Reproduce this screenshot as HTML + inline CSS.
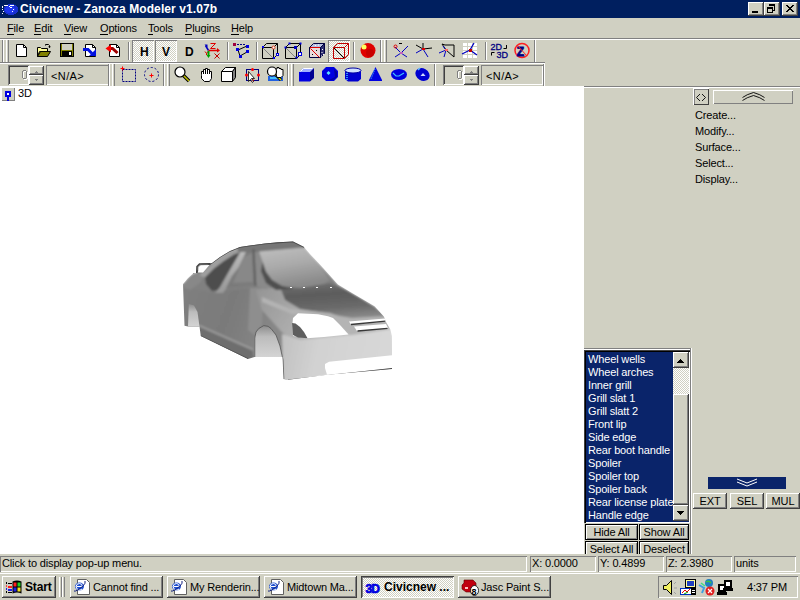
<!DOCTYPE html>
<html><head><meta charset="utf-8">
<style>
*{margin:0;padding:0;box-sizing:border-box}
html,body{width:800px;height:600px;overflow:hidden;background:#d0d0c2}
body{position:relative;font-family:"Liberation Sans",sans-serif;font-size:11px;color:#000}
.a{position:absolute}
.t{position:absolute;white-space:pre;line-height:1;letter-spacing:-0.15px}
.chk{box-shadow:inset 1px 1px #808080,inset -1px -1px #fff;background-color:#fff;
background-image:linear-gradient(45deg,#d0d0c2 25%,transparent 25%,transparent 75%,#d0d0c2 75%),linear-gradient(45deg,#d0d0c2 25%,transparent 25%,transparent 75%,#d0d0c2 75%);
background-size:2px 2px;background-position:0 0,1px 1px}
svg{position:absolute;overflow:visible}
u{text-decoration:none;border-bottom:1px solid #000;padding-bottom:0}
</style></head><body>
<div class="a" style="left:0px;top:0px;width:800px;height:18px;background:#001f5f;"></div>
<div class="t" style="left:20px;top:3px;font-size:12px;font-weight:bold;color:#fff;letter-spacing:0.1px">Civicnew - Zanoza Modeler v1.07b</div>
<svg style="left:0px;top:0px;" width="20" height="18" viewBox="0 0 20 18" shape-rendering="crispEdges"><ellipse cx="11" cy="9.5" rx="7.5" ry="5.5" fill="#1830d0"/><ellipse cx="10" cy="9.5" rx="5" ry="4" fill="#2038f0"/><path d="M3.5 5.5h4M2.5 6v2M2.5 9v1M3.5 11v1M2.5 13v1M10 5.5h4M9.5 6v1M10 7.5h2M13.5 9v1M13 11h-1" stroke="#fff" stroke-width="1" fill="none"/></svg>
<div class="a" style="left:748px;top:2px;width:16px;height:14px;background:#d0d0c2;box-shadow:inset -1px -1px #404040,inset 1px 1px #fff,inset -2px -2px #808080"></div>
<div class="a" style="left:764px;top:2px;width:16px;height:14px;background:#d0d0c2;box-shadow:inset -1px -1px #404040,inset 1px 1px #fff,inset -2px -2px #808080"></div>
<div class="a" style="left:782px;top:2px;width:16px;height:14px;background:#d0d0c2;box-shadow:inset -1px -1px #404040,inset 1px 1px #fff,inset -2px -2px #808080"></div>
<svg style="left:748px;top:2px;" width="16" height="14" viewBox="0 0 16 14" shape-rendering="crispEdges"><rect x="4" y="9" width="6" height="2" fill="#000"/></svg>
<svg style="left:764px;top:2px;" width="16" height="14" viewBox="0 0 16 14" shape-rendering="crispEdges"><rect x="5" y="2" width="6" height="2" fill="#000"/><path d="M10.5 4v4.5h-1.5" stroke="#000" fill="none"/><rect x="3.5" y="5.5" width="5" height="5" stroke="#000" fill="none"/><rect x="3" y="5" width="6" height="2" fill="#000"/></svg>
<svg style="left:782px;top:2px;" width="16" height="14" viewBox="0 0 16 14" shape-rendering="crispEdges"><path d="M4 3l7 7M5 3l7 7M11 3l-7 7M12 3l-7 7" stroke="#000" stroke-width="1" shape-rendering="auto"/></svg>
<div class="t" style="left:7px;top:23px;"><u>F</u>ile</div>
<div class="t" style="left:34px;top:23px;"><u>E</u>dit</div>
<div class="t" style="left:64px;top:23px;"><u>V</u>iew</div>
<div class="t" style="left:100px;top:23px;"><u>O</u>ptions</div>
<div class="t" style="left:148px;top:23px;"><u>T</u>ools</div>
<div class="t" style="left:185px;top:23px;"><u>P</u>lugins</div>
<div class="t" style="left:231px;top:23px;"><u>H</u>elp</div>
<div class="a" style="left:0px;top:38px;width:800px;height:1px;background:#808080;"></div>
<div class="a" style="left:0px;top:39px;width:800px;height:1px;background:#fff;"></div>
<div class="a" style="left:2px;top:40px;width:1px;height:22px;background:#808080;"></div>
<div class="a" style="left:3px;top:40px;width:1px;height:22px;background:#fff;"></div>
<div class="a" style="left:6px;top:40px;width:1px;height:22px;background:#fff;"></div>
<div class="a" style="left:8px;top:40px;width:1px;height:22px;background:#808080;"></div>
<div class="a" style="left:380px;top:40px;width:1px;height:22px;background:#808080;"></div>
<div class="a" style="left:381px;top:40px;width:1px;height:22px;background:#fff;"></div>
<div class="a" style="left:384px;top:40px;width:1px;height:22px;background:#fff;"></div>
<div class="a" style="left:386px;top:40px;width:1px;height:22px;background:#808080;"></div>
<div class="a" style="left:534px;top:40px;width:1px;height:22px;background:#808080;"></div>
<div class="a" style="left:535px;top:40px;width:1px;height:22px;background:#fff;"></div>
<div class="a" style="left:128px;top:42px;width:1px;height:18px;background:#808080;"></div>
<div class="a" style="left:129px;top:42px;width:1px;height:18px;background:#fff;"></div>
<div class="a" style="left:227px;top:42px;width:1px;height:18px;background:#808080;"></div>
<div class="a" style="left:228px;top:42px;width:1px;height:18px;background:#fff;"></div>
<div class="a" style="left:256px;top:42px;width:1px;height:18px;background:#808080;"></div>
<div class="a" style="left:257px;top:42px;width:1px;height:18px;background:#fff;"></div>
<div class="a" style="left:353px;top:42px;width:1px;height:18px;background:#808080;"></div>
<div class="a" style="left:354px;top:42px;width:1px;height:18px;background:#fff;"></div>
<div class="a" style="left:485px;top:42px;width:1px;height:18px;background:#808080;"></div>
<div class="a" style="left:486px;top:42px;width:1px;height:18px;background:#fff;"></div>
<div class="a chk" style="left:132px;top:40px;width:22px;height:22px"></div>
<div class="a chk" style="left:155px;top:40px;width:22px;height:22px"></div>
<div class="a chk" style="left:328px;top:40px;width:22px;height:22px"></div>
<div class="a" style="left:0px;top:62px;width:545px;height:1px;background:#808080;"></div>
<div class="a" style="left:0px;top:63px;width:545px;height:1px;background:#fff;"></div>
<div class="a" style="left:8px;top:65px;width:21px;height:20px;background:#d0d0c2;box-shadow:inset 1px 1px #808080,inset -1px -1px #fff"></div>
<div class="a" style="left:9px;top:66px;width:19px;height:18px;box-shadow:inset 1px 1px #404040"></div>
<svg style="left:8px;top:65px;" width="20" height="19" viewBox="0 0 20 19" shape-rendering="crispEdges"><rect x="15.5" y="6.5" width="4" height="8" rx="2" fill="none" stroke="#fff"/><rect x="14.5" y="5.5" width="4" height="8" rx="2" fill="none" stroke="#808080"/></svg>
<div class="a" style="left:29px;top:66px;width:15px;height:9px;background:#d0d0c2;box-shadow:inset -1px -1px #404040,inset 1px 1px #fff,inset -2px -2px #808080"></div>
<div class="a" style="left:29px;top:75px;width:15px;height:10px;background:#d0d0c2;box-shadow:inset -1px -1px #404040,inset 1px 1px #fff,inset -2px -2px #808080"></div>
<svg style="left:29px;top:66px;" width="15" height="19" viewBox="0 0 15 19" shape-rendering="crispEdges"><path d="M6 6h3M7 5h1" stroke="#808080"/><path d="M6 13h3M7 14h1" stroke="#808080"/></svg>
<div class="a" style="left:46px;top:65px;width:63px;height:20px;background:#d0d0c2;box-shadow:inset 1px 1px #808080,inset -1px -1px #fff"></div>
<div class="t" style="left:51px;top:71px;letter-spacing:0.4px">&lt;N/A&gt;</div>
<div class="a" style="left:108px;top:64px;width:1px;height:22px;background:#808080;"></div>
<div class="a" style="left:109px;top:64px;width:1px;height:22px;background:#fff;"></div>
<div class="a" style="left:112px;top:64px;width:1px;height:22px;background:#fff;"></div>
<div class="a" style="left:114px;top:64px;width:1px;height:22px;background:#808080;"></div>
<div class="a" style="left:163px;top:64px;width:1px;height:22px;background:#808080;"></div>
<div class="a" style="left:164px;top:64px;width:1px;height:22px;background:#fff;"></div>
<div class="a" style="left:167px;top:64px;width:1px;height:22px;background:#fff;"></div>
<div class="a" style="left:169px;top:64px;width:1px;height:22px;background:#808080;"></div>
<div class="a" style="left:287px;top:64px;width:1px;height:22px;background:#808080;"></div>
<div class="a" style="left:288px;top:64px;width:1px;height:22px;background:#fff;"></div>
<div class="a" style="left:291px;top:64px;width:1px;height:22px;background:#fff;"></div>
<div class="a" style="left:293px;top:64px;width:1px;height:22px;background:#808080;"></div>
<div class="a" style="left:434px;top:64px;width:1px;height:22px;background:#808080;"></div>
<div class="a" style="left:435px;top:64px;width:1px;height:22px;background:#fff;"></div>
<div class="a" style="left:443px;top:65px;width:21px;height:20px;background:#d0d0c2;box-shadow:inset 1px 1px #808080,inset -1px -1px #fff"></div>
<div class="a" style="left:444px;top:66px;width:19px;height:18px;box-shadow:inset 1px 1px #404040"></div>
<svg style="left:443px;top:65px;" width="20" height="19" viewBox="0 0 20 19" shape-rendering="crispEdges"><rect x="15.5" y="6.5" width="4" height="8" rx="2" fill="none" stroke="#fff"/><rect x="14.5" y="5.5" width="4" height="8" rx="2" fill="none" stroke="#808080"/></svg>
<div class="a" style="left:464px;top:66px;width:15px;height:9px;background:#d0d0c2;box-shadow:inset -1px -1px #404040,inset 1px 1px #fff,inset -2px -2px #808080"></div>
<div class="a" style="left:464px;top:75px;width:15px;height:10px;background:#d0d0c2;box-shadow:inset -1px -1px #404040,inset 1px 1px #fff,inset -2px -2px #808080"></div>
<svg style="left:464px;top:66px;" width="15" height="19" viewBox="0 0 15 19" shape-rendering="crispEdges"><path d="M6 6h3M7 5h1" stroke="#808080"/><path d="M6 13h3M7 14h1" stroke="#808080"/></svg>
<div class="a" style="left:481px;top:65px;width:62px;height:20px;background:#d0d0c2;box-shadow:inset 1px 1px #808080,inset -1px -1px #fff"></div>
<div class="t" style="left:486px;top:71px;letter-spacing:0.4px">&lt;N/A&gt;</div>
<div class="a" style="left:543px;top:64px;width:1px;height:22px;background:#808080;"></div>
<div class="a" style="left:544px;top:64px;width:1px;height:22px;background:#fff;"></div>
<div class="a" style="left:0px;top:86px;width:584px;height:468px;background:#fff;"></div>
<div class="a" style="left:2px;top:88px;width:13px;height:13px;background:#d0d0c2;box-shadow:inset -1px -1px #808080"></div>
<svg style="left:2px;top:88px;" width="13" height="13" viewBox="0 0 13 13" shape-rendering="crispEdges"><rect x="4" y="4" width="4" height="4" stroke="#0000e0" stroke-width="1.4" fill="#fff"/><path d="M6 8v5" stroke="#0000e0" stroke-width="1.4"/></svg>
<div class="t" style="left:18px;top:88px;font-size:11px">3D</div>
<svg style="left:0;top:0" width="584" height="554" viewBox="0 0 584 554"><defs><clipPath id="cs"><path d="M183,284 L188,278 L193,273.5 L196,273 L197,267 L199,264.5 L202,263.5 L210,263.5 L212,263 L220,257 L230,251 L240,247 L250,245.5 L265,243.5 L278,242.2 L293,241.5 L296,243 L304,247 L310,254 L320,264.5 L338,284.5 L353,293.5 L374.7,306.3 L384,316.7 L386,322 L390.3,329.3 L392,336 L392,369 L327,374.8 L286,380 L283.5,379 L282.5,357 L254.5,357 L248,359 L200.75,336 L199.5,326.5 L188,326.5 L184.5,325.8 Z"/></clipPath><filter id="bl" x="-5%" y="-5%" width="110%" height="110%"><feGaussianBlur stdDeviation="0.95"/></filter><linearGradient id="gWind" x1="0" y1="0" x2="0.3" y2="1"><stop offset="0" stop-color="#c0c0c0"/><stop offset="0.5" stop-color="#aaaaaa"/><stop offset="1" stop-color="#8a8a8a"/></linearGradient><linearGradient id="gHood" x1="0" y1="0" x2="0.2" y2="1"><stop offset="0" stop-color="#747474"/><stop offset="0.35" stop-color="#5c5c5c"/><stop offset="0.7" stop-color="#6a6a6a"/><stop offset="1" stop-color="#8c8c8c"/></linearGradient><linearGradient id="gSide" x1="0" y1="0" x2="1" y2="0.3"><stop offset="0" stop-color="#808080"/><stop offset="0.5" stop-color="#7a7a7a"/><stop offset="1" stop-color="#8a8a8a"/></linearGradient><linearGradient id="gFront" x1="0" y1="0" x2="1" y2="0.1"><stop offset="0" stop-color="#c0c0c0"/><stop offset="0.35" stop-color="#d2d2d2"/><stop offset="1" stop-color="#d8d8d8"/></linearGradient><linearGradient id="gFender" x1="0" y1="0" x2="1" y2="0.4"><stop offset="0" stop-color="#949494"/><stop offset="0.5" stop-color="#aaaaaa"/><stop offset="1" stop-color="#c0c0c0"/></linearGradient><linearGradient id="gArch" x1="0" y1="0" x2="0" y2="1"><stop offset="0" stop-color="#8c8c8c"/><stop offset="0.35" stop-color="#bcbcbc"/><stop offset="1" stop-color="#d4d4d4"/></linearGradient><linearGradient id="gCp" x1="0" y1="0" x2="0" y2="1"><stop offset="0" stop-color="#bcbcbc"/><stop offset="1" stop-color="#989898"/></linearGradient></defs><g clip-path="url(#cs)"><g filter="url(#bl)"><path d="M183,284 L188,278 L193,273.5 L196,273 L197,267 L199,264.5 L202,263.5 L210,263.5 L212,263 L220,257 L230,251 L240,247 L250,245.5 L265,243.5 L278,242.2 L293,241.5 L296,243 L304,247 L310,254 L320,264.5 L338,284.5 L353,293.5 L374.7,306.3 L384,316.7 L386,322 L390.3,329.3 L392,336 L392,369 L327,374.8 L286,380 L283.5,379 L282.5,357 L254.5,357 L248,359 L200.75,336 L199.5,326.5 L188,326.5 L184.5,325.8 Z" fill="#808080"/><path d="M178,285 L208,292 L256,288 L290,300 L284,330 L283,382 L250,362 L178,330 Z" fill="url(#gSide)"/><path d="M250,288 L264,288 L262,325 L254,335 L248,330 Z" fill="#8e8e8e"/><path d="M180,286 L196,273 L204,276 L200,283 L190,290 Z" fill="#888888"/><path d="M199,275 L212,264 L222,257 L232,251 L241,247.5 L245,250 L234,254.5 L224,261 L214,268.5 L205,277.5 Z" fill="#a0a0a0"/><path d="M205,277.5 L214,268.5 L224,261 L234,254.5 L240,252.5 L236,262 L228,275 L220,290 L212,291 L206,284 Z" fill="#4e4e4e"/><path d="M240,252.5 L247,250 L239,267 L230,283 L223,293 L215,293 L220,287 L228,273 Z" fill="url(#gCp)"/><path d="M247,250 L254,249 L256,285 L226,288 L232,276 L239,267 Z" fill="#7a7a7a"/><path d="M244,257 L252,253 L253,282 L233,283 Z" fill="#888888"/><path d="M253,249 L259,251 L265,271 L273,281 L270,290 L256,286 Z" fill="#8a8a8a"/><path d="M236,238 L300,236 L306,247 L302,248.5 L259,252 L238,252 Z" fill="#767676"/><path d="M259,251.5 L304,247.5 L310,254 L320,265 L330,280 L320,286 L300,288 L290,288 L282,286 L272,280 L266,272 L263,263 Z" fill="url(#gWind)"/><path d="M280,286 L300,288 L330,283 L345,290 L360,298 L376,308 L390,318 L352,322 L330,314 L300,309 L285,300 Z" fill="url(#gHood)"/><path d="M198,326 L252,350 L254,358 L248,360 L198,337 Z" fill="#6e6e6e"/><path d="M199,325.5 L253,349.5" stroke="#a0a0a0" stroke-width="1.4"/><path d="M256,290 L280,287 L285,300 L300,309 L330,314 L352,322 L356,330 L352,336 L310,340 L292,342 L280,330 L262,310 Z" fill="url(#gFender)"/><path d="M262,297 L290,309 L330,313 L350,320 L346,323 L328,317 L292,314 L262,302 Z" fill="#b4b4b4"/><path d="M328,314 L352,318 L388,316 L392,334 L352,337 L342,328 Z" fill="#b4b4b4"/><path d="M282,334 L300,340 L352,335 L392,329 L396,372 L327,376 L283,384 Z" fill="url(#gFront)"/><path d="M253.5,249 L255.5,286" stroke="#555" stroke-width="1.6"/><path d="M262.5,262 L266,272 L272,280 L282,286 L294,289 L276,290 L266,283 L261,271 Z" fill="#505050"/></g><path d="M193,273.5 L212,263 L220,257 L230,251 L240,247 L250,245.5 L265,243.5 L293,241.5 L304,247" stroke="#4a4a4a" stroke-width="1.4" fill="none"/><path d="M254.5,357 L254.5,338 L256,332 L258.75,328.5 L263.75,325.6 L268,326.3 L271,328.5 L276,335 L280,346 L282,355 L282.5,357 Z" fill="url(#gArch)"/><path d="M254.8,357 L254.8,338 L256,332 L258.75,328.5 L263.75,325.6 L268,326.3 L271,328.5 L276,335 L280,346 L283,360 L283.8,379" stroke="#505050" stroke-width="1" fill="none" opacity="0.75"/><path d="M188.8,304 L194,305.5 L197.5,312 L199.5,326.5 L188,326.5 Z" fill="url(#gArch)"/><path d="M293,318 L298,313.3 L318,314.3 L328,316.3 L333,318 L340,325 L348.5,334.5 L324,337 L307,338.3 L293,336 L292.5,323 Z" fill="#fff"/><path d="M292,323 L295.5,323.5 L300,327 L304,332 L307.5,338.3 L298,337.5 L293,335 Z" fill="#5e5e5e"/><path d="M349,321.5 L385,318.5 L386.5,321.5 L351,324.5 Z" fill="#fff"/><path d="M354,326.5 L386,324 L388,328 L357,331 Z" fill="#fff"/><path d="M351,324.5 L385.4,321.2" stroke="#383838" stroke-width="1.3"/><path d="M357.5,331 L387.5,328.3" stroke="#383838" stroke-width="1.3"/><path d="M329,361.8 L392,355.3 L392,368.3 L327,374.8 L325,368 L325,364 Z" fill="#fff"/><path d="M288,380.2 L392,368.8" stroke="#404040" stroke-width="1.5"/><path d="M200.75,336 L248,358.75" stroke="#505050" stroke-width="1.2"/><rect x="290" y="287" width="2" height="1" fill="#fff"/><rect x="303" y="287" width="2" height="1" fill="#fff"/><rect x="316" y="287" width="2" height="1" fill="#fff"/><rect x="330" y="287" width="2" height="1" fill="#fff"/></g><path d="M198,272.5 L198.5,267 L200.8,265.2 L209.5,265 L203,272.5 Z" fill="#fff"/><path d="M196.8,273 L197,266.5 L199.5,264 L210.5,263.8" stroke="#404040" stroke-width="1.5" fill="none"/></svg>
<div class="a" style="left:584px;top:86px;width:216px;height:1px;background:#808080;"></div>
<div class="a" style="left:584px;top:87px;width:216px;height:1px;background:#fff;"></div>
<div class="a" style="left:693px;top:88px;width:16px;height:17px;background:#d0d0c2;box-shadow:inset 1px 1px #fff,inset -1px -1px #404040,inset 2px 2px #808080"></div>
<svg style="left:693px;top:88px;" width="16" height="17" viewBox="0 0 16 17" shape-rendering="crispEdges"><path d="M7 6l-3.5 3.5l3.5 3.5M9 6l3.5 3.5l-3.5 3.5" stroke="#000" fill="none" stroke-width="0.9" shape-rendering="auto"/></svg>
<div class="a" style="left:713px;top:90px;width:80px;height:14px;background:#d0d0c2;box-shadow:inset 1px 1px #fff,inset -1px -1px #808080"></div>
<svg style="left:713px;top:90px;" width="80" height="14" viewBox="0 0 80 14" shape-rendering="crispEdges"><path d="M29.5 7.5q4-3 11-5q7 2 11 5M29.5 10.5q4-3 11-5q7 2 11 5" stroke="#000" fill="none" stroke-width="0.9" shape-rendering="auto"/></svg>
<div class="t" style="left:695px;top:110px;">Create...</div>
<div class="t" style="left:695px;top:126px;">Modify...</div>
<div class="t" style="left:695px;top:142px;">Surface...</div>
<div class="t" style="left:695px;top:158px;">Select...</div>
<div class="t" style="left:695px;top:174px;">Display...</div>
<div class="a" style="left:584px;top:348px;width:108px;height:1px;background:#808080;"></div>
<div class="a" style="left:584px;top:349px;width:108px;height:1px;background:#fff;"></div>
<div class="a" style="left:690px;top:348px;width:1px;height:206px;background:#808080;"></div>
<div class="a" style="left:691px;top:348px;width:1px;height:206px;background:#fff;"></div>
<div class="a" style="left:584px;top:350px;width:106px;height:173px;background:#0a246a;box-shadow:inset 1px 1px #404040,inset 2px 2px #000,inset -1px -1px #fff"></div>
<div class="t" style="left:588px;top:354px;color:#fff">Wheel wells</div>
<div class="t" style="left:588px;top:367px;color:#fff">Wheel arches</div>
<div class="t" style="left:588px;top:380px;color:#fff">Inner grill</div>
<div class="t" style="left:588px;top:393px;color:#fff">Grill slat 1</div>
<div class="t" style="left:588px;top:406px;color:#fff">Grill slatt 2</div>
<div class="t" style="left:588px;top:419px;color:#fff">Front lip</div>
<div class="t" style="left:588px;top:432px;color:#fff">Side edge</div>
<div class="t" style="left:588px;top:445px;color:#fff">Rear boot handle</div>
<div class="t" style="left:588px;top:458px;color:#fff">Spoiler</div>
<div class="t" style="left:588px;top:471px;color:#fff">Spoiler top</div>
<div class="t" style="left:588px;top:484px;color:#fff">Spoiler back</div>
<div class="t" style="left:588px;top:497px;color:#fff">Rear license plate</div>
<div class="t" style="left:588px;top:510px;color:#fff">Handle edge</div>
<div class="a chk" style="left:673px;top:352px;width:16px;height:168px;box-shadow:none"></div>
<div class="a" style="left:673px;top:352px;width:16px;height:16px;background:#d0d0c2;box-shadow:inset -1px -1px #404040,inset 1px 1px #fff,inset -2px -2px #808080"></div>
<svg style="left:673px;top:352px;" width="16" height="16" viewBox="0 0 16 16" shape-rendering="crispEdges"><path d="M4 10h7M5 9h5M6 8h3M7 7h1" stroke="#000"/></svg>
<div class="a" style="left:673px;top:394px;width:16px;height:111px;background:#d0d0c2;box-shadow:inset -1px -1px #404040,inset 1px 1px #fff,inset -2px -2px #808080"></div>
<div class="a" style="left:673px;top:505px;width:16px;height:16px;background:#d0d0c2;box-shadow:inset -1px -1px #404040,inset 1px 1px #fff,inset -2px -2px #808080"></div>
<svg style="left:673px;top:505px;" width="16" height="16" viewBox="0 0 16 16" shape-rendering="crispEdges"><path d="M4 6h7M5 7h5M6 8h3M7 9h1" stroke="#000"/></svg>
<div class="a" style="left:585px;top:524px;width:53px;height:16px;background:#d0d0c2;border:1px solid #000;box-shadow:inset 1px 1px #fff,inset -1px -1px #808080"></div>
<div class="t" style="left:585px;top:527px;width:53px;text-align:center">Hide All</div>
<div class="a" style="left:639px;top:524px;width:50px;height:16px;background:#d0d0c2;border:1px solid #000;box-shadow:inset 1px 1px #fff,inset -1px -1px #808080"></div>
<div class="t" style="left:639px;top:527px;width:50px;text-align:center">Show All</div>
<div class="a" style="left:585px;top:541px;width:53px;height:16px;background:#d0d0c2;border:1px solid #000;box-shadow:inset 1px 1px #fff,inset -1px -1px #808080"></div>
<div class="t" style="left:585px;top:544px;width:53px;text-align:center">Select All</div>
<div class="a" style="left:639px;top:541px;width:50px;height:16px;background:#d0d0c2;border:1px solid #000;box-shadow:inset 1px 1px #fff,inset -1px -1px #808080"></div>
<div class="t" style="left:639px;top:544px;width:50px;text-align:center">Deselect</div>
<div class="a" style="left:708px;top:477px;width:78px;height:12px;background:#0a246a;"></div>
<svg style="left:708px;top:477px;" width="78" height="12" viewBox="0 0 78 12" shape-rendering="crispEdges"><path d="M29 2l10 4l10-4M29 5l10 4l10-4" stroke="#fff" fill="none" shape-rendering="auto"/></svg>
<div class="a" style="left:693px;top:493px;width:34px;height:16px;background:#d0d0c2;box-shadow:inset -1px -1px #404040,inset 1px 1px #fff,inset -2px -2px #808080"></div>
<div class="t" style="left:693px;top:496px;width:34px;text-align:center">EXT</div>
<div class="a" style="left:730px;top:493px;width:34px;height:16px;background:#d0d0c2;box-shadow:inset -1px -1px #404040,inset 1px 1px #fff,inset -2px -2px #808080"></div>
<div class="t" style="left:730px;top:496px;width:34px;text-align:center">SEL</div>
<div class="a" style="left:766px;top:493px;width:34px;height:16px;background:#d0d0c2;box-shadow:inset -1px -1px #404040,inset 1px 1px #fff,inset -2px -2px #808080"></div>
<div class="t" style="left:766px;top:496px;width:34px;text-align:center">MUL</div>
<div class="a" style="left:0px;top:554px;width:800px;height:18px;background:#d0d0c2;"></div>
<div class="a" style="left:0px;top:556px;width:527px;height:16px;background:#d0d0c2;box-shadow:inset 1px 1px #808080,inset -1px -1px #fff"></div>
<div class="t" style="left:2px;top:558px;">Click to display pop-up menu.</div>
<div class="a" style="left:530px;top:556px;width:66px;height:16px;background:#d0d0c2;box-shadow:inset 1px 1px #808080,inset -1px -1px #fff"></div>
<div class="t" style="left:532px;top:558px;">X: 0.0000</div>
<div class="a" style="left:598px;top:556px;width:66px;height:16px;background:#d0d0c2;box-shadow:inset 1px 1px #808080,inset -1px -1px #fff"></div>
<div class="t" style="left:600px;top:558px;">Y: 0.4899</div>
<div class="a" style="left:666px;top:556px;width:66px;height:16px;background:#d0d0c2;box-shadow:inset 1px 1px #808080,inset -1px -1px #fff"></div>
<div class="t" style="left:668px;top:558px;">Z: 2.3980</div>
<div class="a" style="left:734px;top:556px;width:62px;height:16px;background:#d0d0c2;box-shadow:inset 1px 1px #808080,inset -1px -1px #fff"></div>
<div class="t" style="left:736px;top:558px;">units</div>
<div class="a" style="left:0px;top:572px;width:800px;height:28px;background:#d0d0c2;"></div>
<div class="a" style="left:0px;top:572px;width:800px;height:1px;background:#d0d0c2;"></div>
<div class="a" style="left:0px;top:573px;width:800px;height:1px;background:#fff;"></div>
<div class="a" style="left:2px;top:576px;width:54px;height:22px;background:#d0d0c2;box-shadow:inset -1px -1px #404040,inset 1px 1px #fff,inset -2px -2px #808080"></div>
<div class="t" style="left:25px;top:581px;font-weight:bold;font-size:12px">Start</div>
<div class="a" style="left:59px;top:577px;width:1px;height:20px;background:#fff;"></div>
<div class="a" style="left:61px;top:577px;width:1px;height:20px;background:#808080;"></div>
<div class="a" style="left:62px;top:577px;width:1px;height:20px;background:#fff;"></div>
<div class="a" style="left:64px;top:577px;width:1px;height:20px;background:#808080;"></div>
<div class="a" style="left:70px;top:576px;width:93px;height:22px;background:#d0d0c2;box-shadow:inset -1px -1px #404040,inset 1px 1px #fff,inset -2px -2px #808080"></div>
<div class="t" style="left:93px;top:582px;">Cannot find ...</div>
<div class="a" style="left:167px;top:576px;width:93px;height:22px;background:#d0d0c2;box-shadow:inset -1px -1px #404040,inset 1px 1px #fff,inset -2px -2px #808080"></div>
<div class="t" style="left:190px;top:582px;">My Renderin...</div>
<div class="a" style="left:264px;top:576px;width:93px;height:22px;background:#d0d0c2;box-shadow:inset -1px -1px #404040,inset 1px 1px #fff,inset -2px -2px #808080"></div>
<div class="t" style="left:287px;top:582px;">Midtown Ma...</div>
<div class="a chk" style="left:361px;top:576px;width:93px;height:22px;box-shadow:inset 1px 1px #404040,inset -1px -1px #fff,inset 2px 2px #808080"></div>
<div class="t" style="left:384px;top:581px;font-weight:bold;font-size:12px;letter-spacing:0">Civicnew ...</div>
<div class="a" style="left:458px;top:576px;width:93px;height:22px;background:#d0d0c2;box-shadow:inset -1px -1px #404040,inset 1px 1px #fff,inset -2px -2px #808080"></div>
<div class="t" style="left:481px;top:582px;">Jasc Paint S...</div>
<div class="a" style="left:658px;top:576px;width:140px;height:22px;background:#d0d0c2;box-shadow:inset 1px 1px #808080,inset -1px -1px #fff"></div>
<div class="t" style="left:747px;top:582px;">4:37 PM</div>
<svg style="left:0;top:0" width="800" height="100" viewBox="0 0 800 100"><path d="M16.5 44.5h7l3 3v9h-10z" fill="#fff" stroke="#000"/><path d="M23.5 44.5v3h3" fill="none" stroke="#000"/><path d="M37.5 47.5h3l1 1h6v3h-8l-2 5z" fill="#ffff99" stroke="#000"/><path d="M37.5 56.5l3-5h10l-3 5z" fill="#808000" stroke="#000"/><path d="M45.5 45.5v-1h3l1 1v2" fill="none" stroke="#000"/><path d="M48 46.5h3l-1.5 1.5z" fill="#000"/><rect x="60.5" y="43.5" width="13" height="13" fill="#808000" stroke="#000"/><rect x="62" y="44" width="10" height="6" fill="#d0d0c2"/><rect x="62" y="51" width="10" height="5" fill="#000"/><rect x="69" y="52" width="2" height="3" fill="#fff"/><path d="M85.5 44.5h7l3 3v9h-10z" fill="#fff" stroke="#000"/><path d="M92.5 44.5v3h3" fill="none" stroke="#000"/><path d="M83 49.5h5l4 4" fill="none" stroke="#0010e0" stroke-width="3"/><path d="M89 56h7v-7z" fill="#0010e0"/><path d="M109.5 44.5h7l3 3v9h-10z" fill="#fff" stroke="#000"/><path d="M116.5 44.5v3h3" fill="none" stroke="#000"/><path d="M110 48.5h2.5l5 4.5" fill="none" stroke="#a00000" stroke-width="3"/><path d="M105.5 48.5l5.5-4v8z" fill="#ff0000"/><text x="140" y="55.5" font-family="Liberation Sans" font-weight="bold" font-size="12" fill="#000">H</text><text x="162" y="55.5" font-family="Liberation Sans" font-weight="bold" font-size="12" fill="#000">V</text><text x="185" y="55.5" font-family="Liberation Sans" font-weight="bold" font-size="12" fill="#000">D</text><path d="M208.5 50.5l-3-5" stroke="#0000c0" stroke-width="1.5" fill="none"/><path d="M204.5 44.5h3v3z" fill="#0000c0"/><path d="M210.5 43.5h5l-5 5h5" stroke="#e00000" fill="none"/><path d="M208.5 50.5h10" stroke="#e00000" stroke-width="1.5"/><path d="M217 48l3 2.5l-3 2z" fill="#e00000"/><path d="M214.5 53.5l5 5M219.5 53.5l-5 5" stroke="#c00000"/><path d="M205 51.5l1.5 2l1.5-2M206.5 53.5v1.5" stroke="#e00000" fill="none"/><path d="M208.5 51v4" stroke="#00a000" stroke-width="2"/><path d="M206.5 55h4l-2 3z" fill="#00a000"/><rect x="233" y="43" width="3" height="3" fill="#a00040"/><path d="M237 44.5h2M240 44.5h2M243 44.5h2" stroke="#000080"/><path d="M238 50l9-4M238 50l2 6M240 56l7-4" stroke="#000" stroke-width="1" fill="none"/><rect x="246" y="45" width="3" height="3" fill="#0000e0"/><rect x="236" y="48" width="3" height="3" fill="#0000e0"/><rect x="246" y="50" width="3" height="3" fill="#0000e0"/><rect x="239" y="55" width="3" height="3" fill="#0000e0"/><path d="M262.5 47.5h11v11h-11z" fill="none" stroke="#000"/><path d="M262.5 47.5l4-4h11v11l-4 4M273.5 47.5l4-4" fill="none" stroke="#000"/><path d="M263 48l10 10" stroke="#808080"/><circle cx="273.5" cy="47.5" r="1.5" fill="#fff" stroke="#e04020"/><rect x="276.5" y="53.5" width="2" height="2" fill="#fff" stroke="#0000e0"/><rect x="262" y="46" width="2" height="2" fill="#0000e0"/><rect x="273" y="57" width="2" height="2" fill="#0000e0"/><path d="M285.5 47.5h11v11h-11z" fill="none" stroke="#000"/><path d="M285.5 47.5l4-4h11v11l-4 4M296.5 47.5l4-4" fill="none" stroke="#000"/><path d="M286 48l10 10" stroke="#808080"/><rect x="284.5" y="46.5" width="2" height="2" fill="#0000e0"/><rect x="295.5" y="56.5" width="2" height="2" fill="#0000e0"/><rect x="288.5" y="42.5" width="2" height="2" fill="#0000e0"/><rect x="299.5" y="42.5" width="2" height="2" fill="#0000e0"/><rect x="294" y="46" width="3" height="3" fill="#0000c0"/><rect x="298.5" y="52.5" width="3" height="3" fill="#fff" stroke="#0000e0"/><path d="M309.5 47.5h11v10h-11z" fill="#e8dcdc" stroke="#000040"/><path d="M309.5 47.5l4-4h11l-4 4z" fill="#b8c0e0" stroke="#000040"/><path d="M320.5 47.5l4-4v10l-4 4z" fill="#303070" stroke="#000040"/><path d="M310 47.5h10" stroke="#e00000"/><path d="M310.5 48.5l9 9" stroke="#e00000"/><rect x="315" y="45" width="1" height="1" fill="#fff"/><rect x="318" y="44.5" width="1" height="1" fill="#fff"/><rect x="322" y="49" width="1" height="1" fill="#fff"/><rect x="321.5" y="52" width="1" height="1" fill="#fff"/><rect x="323" y="54" width="1" height="1" fill="#fff"/><rect x="321" y="55.5" width="1" height="1" fill="#fff"/><rect x="312" y="54" width="1" height="1" fill="#000"/><rect x="316" y="50" width="1" height="1" fill="#000"/><path d="M333.5 47.5h11v11h-11z" fill="none" stroke="#c00000"/><path d="M333.5 47.5l4-4h11v11l-4 4M344.5 47.5l4-4" fill="none" stroke="#c00000"/><path d="M334 48l10 10" stroke="#000"/><circle cx="368" cy="50.5" r="7.5" fill="#e00000"/><circle cx="364" cy="47" r="2.5" fill="#ffff60"/><circle cx="370" cy="53" r="4" fill="#b00000" opacity="0.5"/><path d="M395 47l6 6l7-7M401 53l-6 4M401 53l6 4" stroke="#0000c0" fill="none"/><circle cx="395.5" cy="46.5" r="1.5" fill="none" stroke="#e00000"/><path d="M399 43.5h3" stroke="#000"/><rect x="400" y="52" width="3" height="2" fill="#c060c0"/><path d="M423 49l-7-4M423 49v-6M423 49l9-1" stroke="#000" fill="none"/><path d="M423 49l-7 4M423 49l5 8" stroke="#0000c0" fill="none"/><rect x="422" y="48" width="3" height="2" fill="#e00000"/><path d="M442 44l3 1h9v12l-8-7M442 44l4 6" stroke="#000" fill="none"/><path d="M446 50l-7 3M446 50l-2 7M446 50l-3-4" stroke="#0000c0" fill="none"/><rect x="445" y="49" width="3" height="2" fill="#ff6060"/><rect x="463" y="43" width="4" height="3" fill="#fff"/><rect x="463" y="47" width="4" height="3" fill="#fff"/><rect x="463" y="51" width="4" height="3" fill="#fff"/><rect x="463" y="55" width="4" height="3" fill="#fff"/><rect x="468" y="43" width="4" height="3" fill="#fff"/><rect x="468" y="47" width="4" height="3" fill="#fff"/><rect x="468" y="51" width="4" height="3" fill="#fff"/><rect x="468" y="55" width="4" height="3" fill="#fff"/><rect x="473" y="43" width="4" height="3" fill="#fff"/><rect x="473" y="47" width="4" height="3" fill="#fff"/><rect x="473" y="51" width="4" height="3" fill="#fff"/><rect x="473" y="55" width="4" height="3" fill="#fff"/><path d="M470 50l4-7M470 50l-8 4M470 50l7 5" stroke="#0000c0" fill="none" stroke-width="1.3"/><rect x="469" y="49" width="3" height="3" fill="#c00000"/><text x="490.5" y="49.5" font-family="Liberation Sans" font-size="9" fill="#000080" stroke="#000080" stroke-width="0.3">2D</text><text x="496.5" y="58" font-family="Liberation Sans" font-size="9" fill="#000080" stroke="#000080" stroke-width="0.3">3D</text><path d="M506.5 45v3.5h-3M491.5 55.5v-3h3" stroke="#000" fill="none"/><circle cx="522" cy="50.5" r="7" fill="none" stroke="#ff2020" stroke-width="1.5"/><text x="516.8" y="56" font-family="Liberation Sans" font-weight="bold" font-size="12" fill="#000080" stroke="#000080" stroke-width="0.8">Z</text><path d="M517 45l10 11" stroke="#ff2020"/><path d="M122.5 69.5h13v12h-13z" fill="none" stroke="#000080" stroke-dasharray="2 1"/><path d="M120.5 68.5h4M122.5 66.5v4" stroke="#ff0000"/><circle cx="151.5" cy="74.5" r="7" fill="none" stroke="#000080" stroke-dasharray="2 2"/><path d="M149.5 75.5h4M151.5 73.5v4" stroke="#ff0000"/><path d="M183 75l6 6" stroke="#000" stroke-width="3.5"/><path d="M183 75l6 6" stroke="#c0c000" stroke-width="1.5"/><circle cx="180" cy="72" r="5" fill="#fff" stroke="#000" stroke-width="1.2"/><path d="M201.5 74.5v-3h2v-2h2v-1h2v1h2v2h2v7l-2 3h-5l-3-3v-3z" fill="#fff" stroke="#000"/><path d="M203.5 70v4M205.5 69v5M207.5 69v5M209.5 70v4" stroke="#000"/><path d="M221.5 71.5h11v10h-11z" fill="#fff" stroke="#000"/><path d="M221.5 71.5l4-4h10l-3 4z" fill="#fff" stroke="#000"/><path d="M232.5 71.5l3-4v10l-3 4z" fill="#808080" stroke="#000"/><rect x="246.5" y="69.5" width="12" height="11" fill="#d0d0c2" stroke="#000080"/><circle cx="252.5" cy="69.5" r="1.5" fill="#ff0000"/><circle cx="246.5" cy="75" r="1.5" fill="#ff0000"/><circle cx="258.5" cy="75" r="1.5" fill="#ff0000"/><circle cx="252.5" cy="80.5" r="1.5" fill="#ff0000"/><path d="M248.5 71.5v10l2-2l2 3l1-1l-2-3h3z" fill="#fff" stroke="#000" stroke-width="0.8"/><rect x="268" y="76" width="15" height="5" fill="#2060e0"/><rect x="270" y="77" width="10" height="2" fill="#40c0ff"/><path d="M275 74l6 6" stroke="#000" stroke-width="3"/><path d="M275 74l6 6" stroke="#e0e000" stroke-width="1.2"/><path d="M275.5 72v-3h1.5v-1.5h2v1h2v1h2v6l-2 2h-4z" fill="#fff" stroke="#000"/><circle cx="272" cy="71.5" r="4.5" fill="#fff" stroke="#000" stroke-width="1.2"/><path d="M299 72h11v9.5h-11z" fill="#0000e0"/><path d="M299 72l4-4h11l-4 4z" fill="#a0b0ff"/><path d="M300.5 71.5l3-3h9" stroke="#fff" fill="none"/><path d="M310 72l4-4v10l-4 3.5z" fill="#000090"/><path d="M326 67h8l4 4v6l-4 4h-8l-4-4v-6z" fill="#0000e0"/><path d="M334 69l3 3v5l-4 3h-4l6-3z" fill="#0000a0"/><path d="M328.5 71l2 2l-2 2l-2-2z" fill="#60e0ff"/><path d="M345 71v8l3 2.5h10l3-2.5v-8z" fill="#0000d0"/><ellipse cx="353" cy="70.5" rx="8" ry="2.5" fill="#d0e0ff" stroke="#0000a0"/><path d="M347 73v7" stroke="#40c0ff" stroke-width="1.5" stroke-dasharray="1 1"/><path d="M375.5 67l6.5 13v1h-13v-1z" fill="#0000e0"/><path d="M375 69l-4 10" stroke="#40c0ff" stroke-width="1" stroke-dasharray="1 1"/><ellipse cx="399" cy="74.5" rx="8" ry="5.5" fill="#0000e0"/><path d="M393 73l3 3h3l5-3" stroke="#40c0ff" fill="none" stroke-width="1.2"/><ellipse cx="422.5" cy="74.5" rx="7.5" ry="6" fill="#0000d0" transform="rotate(30 422.5 74.5)"/><path d="M418 70l2-2" stroke="#60c0ff" stroke-width="1.5"/><path d="M420.5 76l2.5-3l2.5 3z" fill="#d0d8ff"/></svg>
<svg style="left:0;top:0" width="800" height="600" viewBox="0 0 800 600"><path d="M12.5 581.5 q4.5-2 9 0 v12 q-4.5-2 -9 0z" fill="#000"/><rect x="13.5" y="582.5" width="3" height="4" fill="#ff2020"/><rect x="17.5" y="582.5" width="3" height="4" fill="#20d020"/><rect x="13.5" y="587.5" width="3" height="4" fill="#2020e0"/><rect x="17.5" y="587.5" width="3" height="4" fill="#f0e020"/><rect x="6" y="582" width="1" height="2" fill="#000"/><rect x="6" y="585" width="1" height="2" fill="#ff4040"/><rect x="6" y="588" width="1" height="2" fill="#2020e0"/><rect x="6" y="591" width="1" height="2" fill="#000"/><rect x="8" y="583" width="4" height="1" fill="#000"/><rect x="8" y="586" width="4" height="2" fill="#ff2020"/><rect x="8" y="589" width="4" height="2" fill="#2020e0"/><rect x="8" y="592" width="4" height="1" fill="#000"/><path d="M77.5 579.5h9l3 3v12h-12z" fill="#fff" stroke="#606060"/><ellipse cx="79.5" cy="586.5" rx="4.5" ry="4" fill="#2050d0"/><path d="M76.5 586.5h6M82.5 586.5q-0.5-3-3-3q-3 0-3.5 3q0.5 3.5 3.5 3.5q1.5 0 2.5-1" stroke="#fff" fill="none" stroke-width="1"/><path d="M74 591q2 1 9-5q3-3 2-5" stroke="#102080" fill="none" stroke-width="1"/><path d="M174.5 579.5h9l3 3v12h-12z" fill="#fff" stroke="#606060"/><ellipse cx="176.5" cy="586.5" rx="4.5" ry="4" fill="#2050d0"/><path d="M173.5 586.5h6M179.5 586.5q-0.5-3-3-3q-3 0-3.5 3q0.5 3.5 3.5 3.5q1.5 0 2.5-1" stroke="#fff" fill="none" stroke-width="1"/><path d="M171 591q2 1 9-5q3-3 2-5" stroke="#102080" fill="none" stroke-width="1"/><path d="M271.5 579.5h9l3 3v12h-12z" fill="#fff" stroke="#606060"/><ellipse cx="273.5" cy="586.5" rx="4.5" ry="4" fill="#2050d0"/><path d="M270.5 586.5h6M276.5 586.5q-0.5-3-3-3q-3 0-3.5 3q0.5 3.5 3.5 3.5q1.5 0 2.5-1" stroke="#fff" fill="none" stroke-width="1"/><path d="M268 591q2 1 9-5q3-3 2-5" stroke="#102080" fill="none" stroke-width="1"/><text x="365.5" y="592.5" font-family="Liberation Sans" font-weight="bold" font-size="12" fill="#0000e0" stroke="#0000e0" stroke-width="0.7" letter-spacing="-0.8">3D</text><path d="M464 580h9l3 3v6l-3 3h-7l-4-3v-4l2-2z" fill="#c00010" stroke="#600000" stroke-width="0.6"/><rect x="465" y="587" width="3" height="2" fill="#ffc0c0"/><ellipse cx="474.5" cy="590.5" rx="4" ry="5" fill="#fff" stroke="#000" stroke-width="0.8"/><text x="471.6" y="594.5" font-family="Liberation Sans" font-weight="bold" font-size="9" fill="#000">8</text><path d="M663.5 585.5h3l5-5v14l-5-5h-3z" fill="#f0f060" stroke="#000"/><path d="M674 584l2-2M674 588h3M674 592l2 2" stroke="#a0a0a0"/><rect x="685.5" y="579.5" width="10" height="8" fill="#ffffa0" stroke="#000"/><rect x="687" y="581" width="7" height="5" fill="#2040c0"/><rect x="680.5" y="588.5" width="12" height="6" fill="#fff" stroke="#0030c0"/><path d="M682 593l3-3l2 2l3-3" stroke="#e00000" fill="none"/><path d="M684 594l4-2" stroke="#00a000"/><rect x="691" y="588" width="5" height="7" fill="#000"/><rect x="692" y="590" width="3" height="1" fill="#fff"/><rect x="692" y="592" width="3" height="1" fill="#fff"/><circle cx="709" cy="583" r="4" fill="#2080c0"/><path d="M706 582q3-2 5 1" stroke="#40c040" fill="none" stroke-width="1.5"/><path d="M699 585l5 3l-2 5" stroke="#40a0e0" stroke-width="2" fill="none"/><path d="M701 583l4 3" stroke="#40e080" stroke-width="1.5"/><circle cx="710" cy="591" r="4.5" fill="#e02020"/><path d="M708 589l4 4M712 589l-4 4" stroke="#fff" stroke-width="1.2"/><rect x="724.5" y="580.5" width="7" height="7" fill="#000" stroke="#000"/><rect x="726" y="582" width="4" height="4" fill="#fff"/><rect x="718.5" y="584.5" width="7" height="7" fill="#000" stroke="#000"/><rect x="720" y="586" width="4" height="4" fill="#fff"/><rect x="717" y="592" width="10" height="3" fill="#000"/><rect x="723" y="588" width="10" height="3" fill="#000"/></svg>
</body></html>
